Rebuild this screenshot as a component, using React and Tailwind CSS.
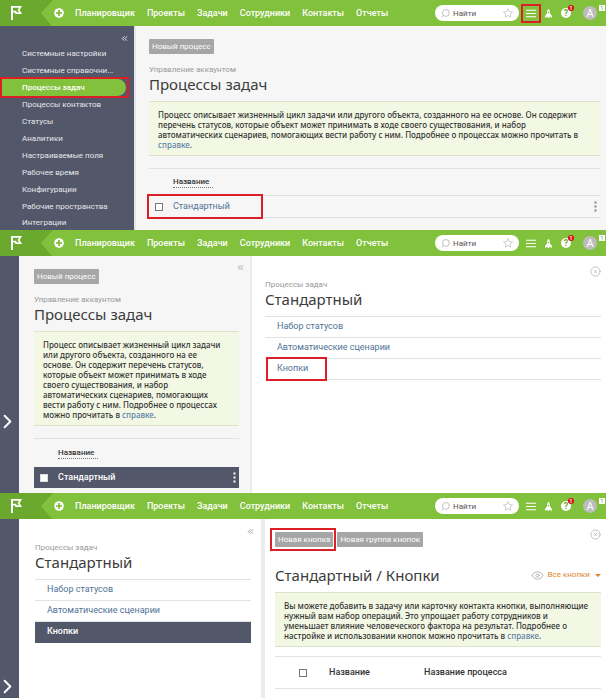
import { ChevronRight, ChevronsLeft, CircleX, Eye } from "lucide-react";
import clsx from "clsx";

const NAV = ["Планировщик", "Проекты", "Задачи", "Сотрудники", "Контакты", "Отчеты"];

const SETTINGS = [
  "Системные настройки",
  "Системные справочни...",
  "Процессы задач",
  "Процессы контактов",
  "Статусы",
  "Аналитики",
  "Настраиваемые поля",
  "Рабочее время",
  "Конфигурации",
  "Рабочие пространства",
  "Интеграции",
];

const PROCESS_LINKS = ["Набор статусов", "Автоматические сценарии", "Кнопки"];

// Red frame drawn over the element the reader has to click
const Highlight = ({ className }) => (
  <span className={clsx("pointer-events-none absolute z-10 border-2 border-[#dc1f26]", className)} />
);

const Flag = () => (
  <svg viewBox="0 0 12 14" className="ml-[10px] h-[14px] w-3 shrink-0">
    <path
      d="M1 0H12L9.6 4 12 8H5.2V6.4H3V14H1ZM3 1.8V4.8H6.4V6.3H9L7.7 4 9 1.8Z"
      fill="#fff"
      fillRule="evenodd"
    />
  </svg>
);

const Rocket = () => (
  <svg viewBox="0 0 8 11" className="h-[11px] w-[7px]" fill="#fff">
    <path d="M4 0C5.3 1.3 5.8 3 5.6 5.2L7.8 8.2V10.6L5.4 9.2H4.8V10.5H3.2V9.2H2.6L.2 10.6V8.2L2.4 5.2C2.2 3 2.7 1.3 4 0Z" />
    <circle cx="4" cy="4.4" r=".9" fill="#82c13b" />
  </svg>
);

const Header = ({ highlightMenu }) => (
  <header className="flex h-[26px] items-center bg-[#82c13b] text-white">
    <a href="#home" aria-label="Главная" className="relative flex h-full w-[54px] shrink-0 items-center">
      <svg viewBox="0 0 54 26" className="absolute inset-0 h-full w-full">
        <path d="M0 0H53L41 13 52 26H0Z" fill="#6aa92e" />
      </svg>
      <span className="relative flex">
        <Flag />
      </span>
    </a>
    <button aria-label="Добавить" className="mr-[11px] shrink-0">
      <svg viewBox="0 0 10 10" className="h-[10px] w-[10px]">
        <circle cx="5" cy="5" r="4.8" fill="#fff" />
        <path d="M5 2v6M2 5h6" stroke="#76b533" strokeWidth="1.6" />
      </svg>
    </button>
    <nav className="flex gap-3 pt-[2px] text-[9px] font-medium whitespace-nowrap">
      {NAV.map((item) => (
        <a key={item} href="#nav">
          {item}
        </a>
      ))}
    </nav>
    <div className="ml-auto flex shrink-0 items-center">
      <label className="flex h-4 w-[84px] items-center rounded-full bg-white pr-[6px] pl-[6px]">
        <svg viewBox="0 0 10 10" className="h-[9px] w-[9px] shrink-0" fill="none" stroke="#a9a9a9" strokeWidth=".8">
          <circle cx="5.4" cy="4.4" r="3.8" />
          <path d="M2.6 7.2L.6 9.4" />
        </svg>
        <input
          aria-label="Найти"
          placeholder="Найти"
          className="ml-[3px] h-4 w-0 flex-1 pt-px text-[8px] leading-4 outline-none placeholder:text-[#555]"
        />
        <svg viewBox="0 0 12 12" className="h-[10px] w-[10px] shrink-0" fill="none" stroke="#bdbdbd" strokeWidth=".9">
          <path d="M6 .8L7.5 4.3 11.4 4.7 8.5 7.2 9.3 11 6 9 2.7 11 3.5 7.2.6 4.7 4.5 4.3Z" />
        </svg>
      </label>
      <button aria-label="Меню" className="relative ml-[7px] flex h-[9px] w-[10px] items-center">
        <svg viewBox="0 0 10 9" className="h-[9px] w-[10px]" stroke="#fff" strokeWidth="1.1">
          <path d="M0 1.3h10M0 4.5h10M0 7.7h10" />
        </svg>
        {highlightMenu && <Highlight className="-inset-[5px]" />}
      </button>
      <button aria-label="Новости" className="ml-[9px]">
        <Rocket />
      </button>
      <button
        aria-label="Справка"
        className="relative ml-[9px] flex h-[10px] w-[10px] items-center justify-center rounded-full bg-white text-[9px] leading-none font-bold text-[#6fae2f]"
      >
        ?
        <span className="absolute -top-[3px] left-[7px] flex h-[6px] w-[6px] items-center justify-center rounded-full bg-[#d90f14] text-[5px] leading-none text-white">
          1
        </span>
      </button>
      <button
        aria-label="Профиль"
        className="relative mr-[9px] ml-[12px] flex h-[14px] w-[14px] items-center justify-center rounded-full bg-[#bcbcbc] text-[11px] leading-none text-white"
      >
        A
        <span className="absolute -top-px left-[16px] flex h-[6px] w-[6px] items-center justify-center bg-white text-[5px] leading-none text-[#777]">
          1
        </span>
      </button>
    </div>
  </header>
);

const GrayButton = ({ children, highlighted }) => (
  <button className="relative h-[15px] rounded-[1px] bg-[#a6a6a6] px-[3px] text-[8px] whitespace-nowrap text-white">
    {children}
    {highlighted && <Highlight className="-inset-y-[4px] -right-[3px] -left-[5px]" />}
  </button>
);

const Heading = ({ children }) => (
  <h1 className="font-['Noto_Sans','Open_Sans',sans-serif] text-[15px] leading-[18px] text-[#3c3c3c]">{children}</h1>
);

const Title = ({ label, children }) => (
  <div className="whitespace-nowrap">
    <p className="text-[8px] leading-[10px] text-[#999]">{label}</p>
    <Heading>{children}</Heading>
  </div>
);

// Help text, the last line ends with a link to the docs
const Info = ({ lines, last }) => (
  <p className="mt-2 border-y border-[#dde3c9] bg-[#f3f8e4] px-[9px] pt-2 pb-[5px] font-['Noto_Sans','Open_Sans',sans-serif] text-[8px] leading-[10px] font-medium whitespace-nowrap text-[#333]">
    {lines.map((line) => (
      <span key={line} className="block">
        {line}
      </span>
    ))}
    {last}
    <a href="#help" className="text-[#5d82a8]">
      справке
    </a>
    .
  </p>
);

const ColumnName = () => (
  <span className="border-b border-dotted border-[#777] pr-1 text-[8px] leading-[10px] font-medium text-[#333]">
    Название
  </span>
);

const Checkbox = ({ label, className }) => (
  <input
    type="checkbox"
    aria-label={label}
    className={clsx("h-2 w-2 shrink-0 appearance-none border bg-white", className)}
  />
);

const Dots = ({ className }) => (
  <button aria-label="Действия" className={clsx("ml-auto", className)}>
    <svg viewBox="0 0 3 11" className="h-[11px] w-[3px]" fill="currentColor">
      <path d="M.5.5h2v2h-2zM.5 4.5h2v2h-2zM.5 8.5h2v2h-2z" />
    </svg>
  </button>
);

const Collapse = ({ className }) => (
  <button aria-label="Свернуть" className={clsx("block", className)}>
    <ChevronsLeft className="h-[9px] w-[9px]" strokeWidth={2.5} />
  </button>
);

const Close = ({ className }) => (
  <button aria-label="Закрыть" className={clsx("ml-auto block text-[#aaa]", className)}>
    <CircleX className="h-[11px] w-[11px]" strokeWidth={1.5} />
  </button>
);

const Rail = ({ className }) => (
  <aside className={clsx("flex w-[19px] shrink-0 bg-[#53576a] text-white", className)}>
    <button aria-label="Развернуть" className="-ml-1">
      <ChevronRight className="h-[23px] w-[23px]" strokeWidth={2} />
    </button>
  </aside>
);

const ProcessLinks = ({ selected, highlighted }) => (
  <ul className="border-t border-[#e2e2e2] text-[9px]">
    {PROCESS_LINKS.map((item) => (
      <li
        key={item}
        className={clsx(
          "relative flex h-[21px] items-center border-b pl-3",
          item === selected
            ? "border-[#53576a] bg-[#53576a] font-medium text-white"
            : "border-[#e2e2e2] text-[#517396]"
        )}
      >
        <a href="#process">{item}</a>
        {item === highlighted && <Highlight className="-top-[2px] -bottom-[2px] left-px w-[61px]" />}
      </li>
    ))}
  </ul>
);

const SettingsScreen = () => (
  <section>
    <Header highlightMenu />
    <div className="flex">
      <aside className="w-[134px] shrink-0 bg-[#53576a] pt-2 text-[#e6e7ec]">
        <Collapse className="mr-[5px] ml-auto" />
        <ul className="mt-[2px] pr-2 text-[8px] whitespace-nowrap">
          {SETTINGS.map((item) => {
            const active = item === "Процессы задач";
            return (
              <li
                key={item}
                className={clsx(
                  "relative flex h-[17px] items-center pl-[22px] last:h-[15px]",
                  active && "rounded-r-full bg-[#82c13b] font-medium text-white"
                )}
              >
                <a href="#settings">{item}</a>
                {active && <Highlight className="-inset-y-[2px] -right-[3px] left-0" />}
              </li>
            );
          })}
        </ul>
      </aside>
      <main className="min-w-0 flex-1 border-l-2 border-[#e6e6e6] bg-[#f6f6f6] pt-[13px] pr-[6px] pb-3 pl-[13px]">
        <div className="mb-[11px] flex">
          <GrayButton>Новый процесс</GrayButton>
        </div>
        <Title label="Управление аккаунтом">Процессы задач</Title>
        <Info
          lines={[
            "Процесс описывает жизненный цикл задачи или другого объекта, созданного на ее основе. Он содержит",
            "перечень статусов, которые объект может принимать в ходе своего существования, и набор",
            "автоматических сценариев, помогающих вести работу с ним. Подробнее о процессах можно прочитать в",
          ]}
        />
        <div className="mt-3 flex h-7 items-center border-y border-[#e2e2e2] pl-6">
          <ColumnName />
        </div>
        <div className="relative flex h-[22px] items-center border-b border-[#e2e2e2] pl-[6px]">
          <Checkbox label="Стандартный" className="border-[#777]" />
          <a href="#standard" className="ml-[10px] text-[9px] text-[#517396]">
            Стандартный
          </a>
          <Dots className="mr-[3px] text-[#888]" />
          <Highlight className="-top-[2px] -bottom-[2px] -left-[2px] w-[116px]" />
        </div>
      </main>
    </div>
  </section>
);

const ProcessScreen = () => (
  <section>
    <Header />
    <div className="flex">
      <Rail className="items-center pt-[93px]" />
      <div className="w-[231px] shrink-0 bg-[#f6f6f6] pt-[13px] pr-[11px] pb-[5px] pl-[15px]">
        <div className="mb-[11px] flex items-start justify-between">
          <GrayButton>Новый процесс</GrayButton>
          <Collapse className="-mt-[6px] -mr-[6px] text-[#999]" />
        </div>
        <Title label="Управление аккаунтом">Процессы задач</Title>
        <Info
          lines={[
            "Процесс описывает жизненный цикл задачи",
            "или другого объекта, созданного на ее",
            "основе. Он содержит перечень статусов,",
            "которые объект может принимать в ходе",
            "своего существования, и набор",
            "автоматических сценариев, помогающих",
            "вести работу с ним. Подробнее о процессах",
          ]}
          last="можно прочитать в "
        />
        <div className="mt-3 flex h-[29px] items-center border-t border-[#e2e2e2] pl-6">
          <ColumnName />
        </div>
        <div className="flex h-[21px] items-center bg-[#53576a] pl-[6px] text-white">
          <Checkbox label="Стандартный" className="border-[#ddd]" />
          <a href="#standard" className="ml-[10px] text-[9px] font-medium">
            Стандартный
          </a>
          <Dots className="mr-[3px]" />
        </div>
      </div>
      <main className="min-w-0 flex-1 border-l-2 border-[#ececec] bg-white pt-[10px] pr-[5px] pl-[13px]">
        <Close />
        <div className="mt-[3px] mb-2">
          <Title label="Процессы задач">Стандартный</Title>
        </div>
        <ProcessLinks highlighted="Кнопки" />
      </main>
    </div>
  </section>
);

const ButtonsScreen = () => (
  <section className="flex flex-1 flex-col">
    <Header />
    <div className="flex flex-1">
      <Rail className="items-end pb-px" />
      <div className="w-[242px] shrink-0 bg-white pt-2 pr-[10px] pl-4">
        <Collapse className="-mr-1 ml-auto text-[#999]" />
        <div className="mt-[7px] mb-2">
          <Title label="Процессы задач">Стандартный</Title>
        </div>
        <ProcessLinks selected="Кнопки" />
      </div>
      <main className="min-w-0 flex-1 border-l-4 border-[#ececec] bg-white pt-[10px] pr-[5px] pb-[10px] pl-[10px]">
        <div className="flex items-start gap-1 pt-[3px]">
          <GrayButton highlighted>Новая кнопка</GrayButton>
          <GrayButton>Новая группа кнопок</GrayButton>
          <Close className="-mt-[3px]" />
        </div>
        <div className="mt-[19px] flex items-center whitespace-nowrap">
          <Heading>Стандартный / Кнопки</Heading>
          <button className="ml-auto flex items-center text-[8px] text-[#e0862c]">
            <Eye className="mr-1 h-[13px] w-[13px] text-[#aaa]" strokeWidth={1.5} />
            Все кнопки
            <svg viewBox="0 0 6 3" className="ml-[5px] h-[3px] w-[6px]" fill="currentColor">
              <path d="M0 0h6L3 3z" />
            </svg>
          </button>
        </div>
        <Info
          lines={[
            "Вы можете добавить в задачу или карточку контакта кнопки, выполняющие",
            "нужный вам набор операций. Это упрощает работу сотрудников и",
            "уменьшает влияние человеческого фактора на результат. Подробнее о",
          ]}
          last="настройке и использовании кнопок можно прочитать в "
        />
        <table className="mt-[9px] w-full border-y border-[#e2e2e2] text-left text-[9px] text-[#333]">
          <thead>
            <tr className="h-8">
              <th className="w-[54px] pl-6">
                <Checkbox label="Выбрать все" className="block border-[#777]" />
              </th>
              <th className="w-[95px] font-medium">Название</th>
              <th className="font-medium">Название процесса</th>
            </tr>
          </thead>
        </table>
      </main>
    </div>
  </section>
);

export default function App() {
  return (
    <div className="flex min-h-screen flex-col bg-white font-['Roboto','Liberation_Sans',sans-serif]">
      <SettingsScreen />
      <ProcessScreen />
      <ButtonsScreen />
    </div>
  );
}
